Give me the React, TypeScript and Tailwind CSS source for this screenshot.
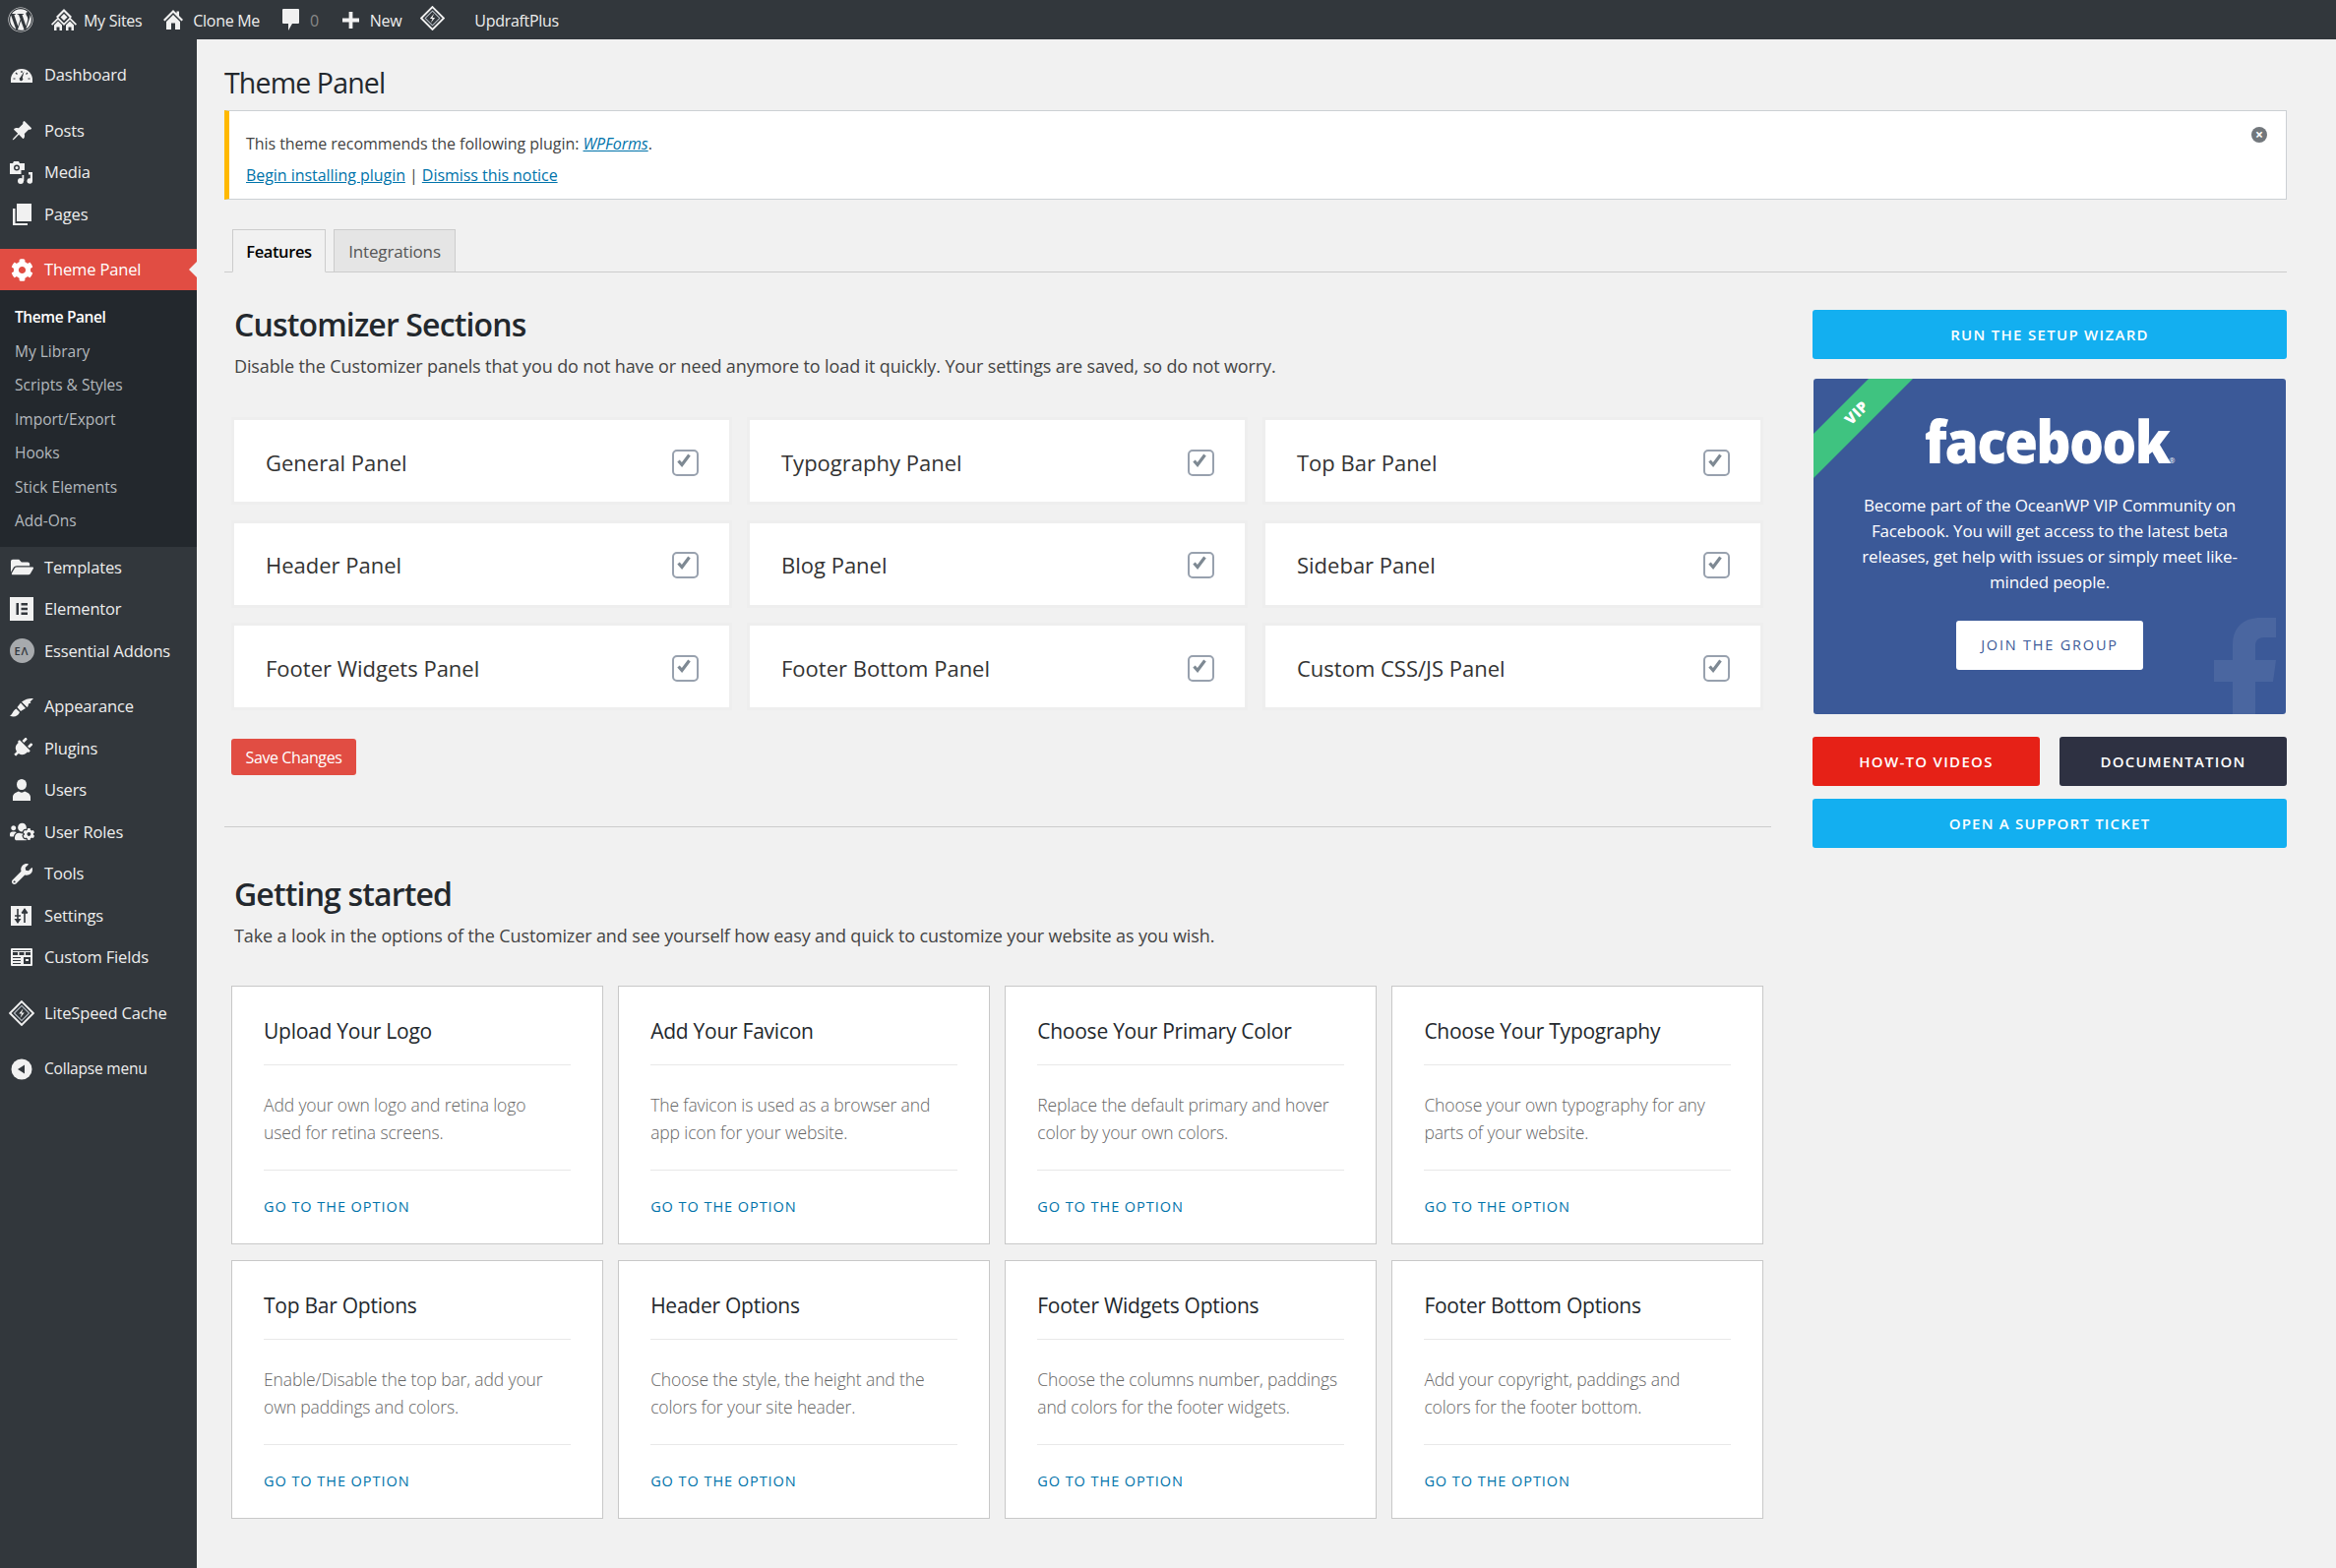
import React from 'react';
import { FaWordpress, FaCog, FaFolderOpen, FaPlug, FaUsersCog, FaWrench } from 'react-icons/fa';
import { BsPinAngleFill } from 'react-icons/bs';

const DashboardIcon = () => (
    <svg viewBox="0 0 24 24" className="w-6 h-6" fill="#f1f1f1">
        <path d="M1 20v-3a11 11 0 0 1 22 0v3z" />
        <path d="M12 8v2M6 10l1.500 1.500M18 10l-1.500 1.500M3.500 16h2M18.500 16h2" stroke="#32373c" strokeWidth="1.200" />
        <path d="M14.500 8.500 12.800 15a1.800 1.800 0 1 1-2-.4z" fill="#32373c" />
    </svg>
);

const MediaIcon = () => (
    <svg viewBox="0 0 24 24" className="w-6 h-6" fill="#f1f1f1">
        <path d="M0 3h3l1-2h5l1 2h5v7h-3.500v4H0z" />
        <circle cx="7" cy="7.500" r="3" fill="#32373c" />
        <circle cx="7" cy="7.500" r="1.500" />
        <path d="M14 12h9v9a2.800 2.800 0 1 1-2.200-2.700V14.500H19V12z" />
        <circle cx="11" cy="21" r="3" />
        <path d="M12.500 15h1.800v6h-1.800z" />
    </svg>
);

const PagesIcon = () => (
    <svg viewBox="0 0 24 24" className="w-6 h-6" fill="#f1f1f1">
        <path d="M7 1h15v18H7z" />
        <path d="M3 6h2.500v15H18v2H3z" />
    </svg>
);

const ElementorIcon = () => (
    <svg viewBox="0 0 24 24" className="w-6 h-6">
        <rect x="0" y="0" width="24" height="24" fill="#f1f1f1" />
        <path d="M6.500 6h2.500v12H6.500zM11.500 6h6.500v2.400h-6.500zM11.500 10.800h6.500v2.400h-6.500zM11.500 15.600h6.500V18h-6.500z" fill="#32373c" />
    </svg>
);

const BrushIcon = () => (
    <svg viewBox="0 0 24 24" className="w-6 h-6" fill="#f1f1f1">
        <path d="M0 21.500c2.500-.5 3-5.500 6.500-7l3.500 3.500c-1.500 4-6 6-10 3.500z" />
        <path d="M7.500 13 11 8.500l5 5.500-5 3z" />
        <path d="M12 7.500c4-3 8-4 12-3.500l-3.500 3.500 1 1-2.500 1-.5 2.500-1 1z" />
    </svg>
);

const UserIcon = () => (
    <svg viewBox="0 0 24 24" className="w-6 h-6" fill="#f1f1f1">
        <ellipse cx="12" cy="6.500" rx="5" ry="5.500" />
        <path d="M3 23v-4c0-3 4-5 6-5.500 1.500 1.500 4.500 1.500 6 0 2 .5 6 2.500 6 5.500v4z" />
    </svg>
);

const SettingsIcon = () => (
    <svg viewBox="0 0 24 24" className="w-6 h-6">
        <rect x="1" y="2" width="21" height="20" fill="#f1f1f1" />
        <path d="M8 5v14M15 5v14M5 12h6M12 9h6" stroke="#32373c" strokeWidth="1.600" />
        <path d="M4.500 15 8 20l3.500-5zM11.500 9 15 4l3.500 5z" fill="#32373c" />
    </svg>
);

const FieldsIcon = () => (
    <svg viewBox="0 0 24 24" className="w-6 h-6">
        <rect x="1" y="3" width="22" height="18" rx="1" fill="#f1f1f1" />
        <path d="M3 5h18v1H3zM3 7h5v3H3zM9.500 7h5v3h-5zM16 7h5v3h-5zM3 12h8v1H3zM3 15h8v1H3zM3 18h8v1H3zM14 12h7v7h-7z" fill="#32373c" />
        <path d="M16 14h3v2h-3z" fill="#f1f1f1" />
    </svg>
);

const DiamondIcon = ({ size = 'w-[26px] h-[26px]' }: { size?: string }) => (
    <svg viewBox="0 0 24 24" className={size} fill="none" stroke="#f1f1f1">
        <path d="M12 1 23 12 12 23 1 12z" strokeWidth="1.800" />
        <path d="M12 5 19 12 12 19 5 12z" strokeWidth="1" stroke="#b9c0c8" />
        <path d="M13.500 7.500 9.500 12.500H12L10.500 16.500 14.500 11.500H12z" fill="#f1f1f1" stroke="none" />
    </svg>
);

const CollapseIcon = () => (
    <svg viewBox="0 0 24 24" className="w-6 h-6">
        <circle cx="12" cy="12" r="10.500" fill="#f1f1f1" />
        <path d="M15 7.500v9L8 12z" fill="#32373c" />
    </svg>
);

const SitesIcon = () => (
    <svg viewBox="0 0 26 24" className="w-[26px] h-[24px]" fill="#f1f1f1">
        <path d="M13 1l8 8-1.500 1.500L13 4 6.500 10.500 5 9z" />
        <path d="M13 6l3.500 3.500L13 13 9.500 9.500z" />
        <path d="M7 9.500l7 7-1.200 1.200L7 12l-5.800 5.700L0 16.500z" />
        <path d="M19 9.500l7 7-1.200 1.200L19 12l-5.800 5.700-1.200-1.200z" />
        <path d="M7 13.500l4 4V23H8.500v-3.500h-3V23H3v-5.500zM19 13.500l4 4V23h-2.500v-3.500h-3V23H15v-5.500z" />
    </svg>
);

const HomeIcon = () => (
    <svg viewBox="0 0 20 20" className="w-5 h-5" fill="#f1f1f1">
        <path d="M10 0l3.500 3.500V1.500H16V6l4 4-1.500 1.500L10 3 1.500 11.500 0 10z" />
        <path d="M3 12l7-7 7 7v8h-5v-6.500H8V20H3z" />
    </svg>
);

const CommentIcon = () => (
    <svg viewBox="0 0 17 22" className="w-[17px] h-[22px]" fill="#f1f1f1">
        <path d="M1 0h15a1 1 0 0 1 1 1v13a1 1 0 0 1-1 1h-6l-4 7v-7H1a1 1 0 0 1-1-1V1a1 1 0 0 1 1-1z" />
    </svg>
);

const PlusIcon = () => (
    <svg viewBox="0 0 18 18" className="w-[17px] h-[17px]" fill="#f1f1f1">
        <path d="M7 0h4v7h7v4h-7v7H7v-7H0V7h7z" />
    </svg>
);

const EssentialIcon = () => (
    <span className="w-[25px] h-[25px] rounded-full bg-[#a7aaad] text-[#32373c] text-[11px] leading-[25px] text-center font-semibold tracking-[1px]">EΛ</span>
);

type MenuItem = { label: string; icon: React.ReactNode; gapBefore?: string };

const menuTop: MenuItem[] = [
    { label: 'Dashboard', icon: <DashboardIcon /> },
    { label: 'Posts', icon: <BsPinAngleFill className="text-[22px] text-[#f1f1f1]" />, gapBefore: 'mt-[14px]' },
    { label: 'Media', icon: <MediaIcon /> },
    { label: 'Pages', icon: <PagesIcon /> },
];

const menuBottom: MenuItem[] = [
    { label: 'Templates', icon: <FaFolderOpen className="text-[23px] text-[#f1f1f1]" /> },
    { label: 'Elementor', icon: <ElementorIcon /> },
    { label: 'Essential Addons', icon: <EssentialIcon /> },
    { label: 'Appearance', icon: <BrushIcon />, gapBefore: 'mt-[14px]' },
    { label: 'Plugins', icon: <FaPlug className="text-[21px] text-[#f1f1f1] rotate-45" /> },
    { label: 'Users', icon: <UserIcon /> },
    { label: 'User Roles', icon: <FaUsersCog className="text-[25px] text-[#f1f1f1]" /> },
    { label: 'Tools', icon: <FaWrench className="text-[21px] text-[#f1f1f1]" /> },
    { label: 'Settings', icon: <SettingsIcon /> },
    { label: 'Custom Fields', icon: <FieldsIcon /> },
    { label: 'LiteSpeed Cache', icon: <DiamondIcon />, gapBefore: 'mt-[14px]' },
];

const subMenu = ['Theme Panel', 'My Library', 'Scripts & Styles', 'Import/Export', 'Hooks', 'Stick Elements', 'Add-Ons'];

const panels = [
    'General Panel', 'Typography Panel', 'Top Bar Panel',
    'Header Panel', 'Blog Panel', 'Sidebar Panel',
    'Footer Widgets Panel', 'Footer Bottom Panel', 'Custom CSS/JS Panel',
];

const options = [
    { title: 'Upload Your Logo', desc: 'Add your own logo and retina logo\nused for retina screens.' },
    { title: 'Add Your Favicon', desc: 'The favicon is used as a browser and\napp icon for your website.' },
    { title: 'Choose Your Primary Color', desc: 'Replace the default primary and hover\ncolor by your own colors.' },
    { title: 'Choose Your Typography', desc: 'Choose your own typography for any\nparts of your website.' },
    { title: 'Top Bar Options', desc: 'Enable/Disable the top bar, add your\nown paddings and colors.' },
    { title: 'Header Options', desc: 'Choose the style, the height and the\ncolors for your site header.' },
    { title: 'Footer Widgets Options', desc: 'Choose the columns number, paddings\nand colors for the footer widgets.' },
    { title: 'Footer Bottom Options', desc: 'Add your copyright, paddings and\ncolors for the footer bottom.' },
];

const SideRow = ({ item }: { item: MenuItem }) => (
    <div className={`flex items-center h-[42.5px] text-[#eee] ${item.gapBefore || ''}`}>
        <span className="w-[45px] flex justify-center pr-[1px] shrink-0">{item.icon}</span>
        <span className="pt-[1px] text-[16.5px] tracking-[-0.15px]">{item.label}</span>
    </div>
);

const App: React.FC = () => {
    return (
        <div className="min-h-screen bg-[#f1f1f1] font-['Open_Sans','Noto_Sans',sans-serif] text-[#23282d]">
            <div className="h-10 bg-[#32373c] flex items-center text-[#eee] text-[16px] tracking-[-0.3px]">
                <FaWordpress className="text-[26px] text-[#f1f1f1] ml-[8px]" />
                <span className="ml-[18px]"><SitesIcon /></span>
                <span className="ml-[7px] pt-[2px]">My Sites</span>
                <span className="ml-[22px]"><HomeIcon /></span>
                <span className="ml-[10px] pt-[2px]">Clone Me</span>
                <span className="ml-[23px]"><CommentIcon /></span>
                <span className="ml-[11px] pt-[2px] text-[#888]">0</span>
                <span className="ml-[24px]"><PlusIcon /></span>
                <span className="ml-[11px] pt-[2px]">New</span>
                <span className="ml-[19px] -mt-[3px]"><DiamondIcon size="w-[25px] h-[25px]" /></span>
                <span className="ml-[30px] pt-[2px]">UpdraftPlus</span>
            </div>
            <div className="flex min-h-[1554px]">
                <aside className="w-[200px] shrink-0 bg-[#32373c] pt-[15px]">
                    {menuTop.map((item) => <SideRow key={item.label} item={item} />)}
                    <div className="mt-[14px] h-[42px] bg-[#e14d43] text-white flex items-center relative">
                        <span className="w-[45px] flex justify-center pr-[1px] shrink-0"><FaCog className="text-[23px]" /></span>
                        <span className="pt-[1px] text-[16.5px] tracking-[-0.15px]">Theme Panel</span>
                        <span className="absolute right-0 top-[13px] border-y-[8px] border-r-[8px] border-y-transparent border-r-[#f1f1f1]" />
                    </div>
                    <div className="bg-[#23282d] pt-[10px] pb-[9px]">
                        {subMenu.map((label, i) => (
                            <div key={label} className={`h-[34.5px] leading-[34.5px] pl-[15px] text-[15.5px] ${i === 0 ? 'text-white font-semibold tracking-[-0.4px]' : 'text-[#b4b9be]'}`}>
                                {label}
                            </div>
                        ))}
                    </div>
                    {menuBottom.map((item) => <SideRow key={item.label} item={item} />)}
                    <div className="mt-[15px] flex items-center h-[42px] text-[#eee]">
                        <span className="w-[45px] flex justify-center pr-[1px] shrink-0"><CollapseIcon /></span>
                        <span className="text-[15.5px] tracking-[-0.2px]">Collapse menu</span>
                    </div>
                </aside>

                <main className="flex-1 pl-[28px] pr-[50px]">
                    <h1 className="mt-[24px] h-10 leading-10 text-[28.5px] tracking-[-0.85px] text-[#23282d]">Theme Panel</h1>
                    <div className="mt-[8px] h-[91px] bg-white border border-[#ccd0d4] border-l-[5px] border-l-[#ffb900] relative pl-[17px] pt-[17px] text-[16px] tracking-[-0.05px] text-[#444]">
                        <p className="leading-[32px]">This theme recommends the following plugin: <a className="text-[#0073aa] underline italic font-medium">WPForms</a>.</p>
                        <p className="leading-[32px]">
                            <a className="text-[#0073aa] underline">Begin installing plugin</a> | <a className="text-[#0073aa] underline">Dismiss this notice</a>
                        </p>
                        <span className="absolute right-[19px] top-[16px] w-4 h-4 rounded-full bg-[#72777c] text-white text-[14px] leading-4 text-center font-bold">×</span>
                    </div>

                    <div className="mt-[30px] h-[44px] border-b border-[#ccc] flex pl-2 gap-2">
                        <div className="w-[95px] h-[44px] pt-[2px] border border-[#ccc] border-b-[#f1f1f1] bg-[#f1f1f1] text-black text-[16.5px] tracking-[-0.4px] font-semibold flex items-center justify-center">Features</div>
                        <div className="w-[124px] h-[43px] pt-[2px] border border-[#ccc] border-b-0 bg-[#e5e5e5] text-[#555] text-[17px] tracking-[-0.15px] flex items-center justify-center">Integrations</div>
                    </div>

                    <div className="flex">
                        <div className="w-[1572px]">
                            <h2 className="mt-[33px] ml-[10px] h-10 leading-10 text-[32px] font-semibold tracking-[-0.85px]">Customizer Sections</h2>
                            <p className="mt-[8px] ml-[10px] leading-7 text-[18px] tracking-[-0.12px] text-[#444]">
                                Disable the Customizer panels that you do not have or need anymore to load it quickly. Your settings are saved, so do not worry.
                            </p>
                            <div className="mt-[38px] ml-[7px] w-[1557px] grid grid-cols-3 gap-x-[15px] gap-y-[15.5px]">
                                {panels.map((name) => (
                                    <div key={name} className="h-[89px] bg-white border-[3px] border-[#eee] flex items-center justify-between pl-[32px] pr-[31px] pt-[3px]">
                                        <span className="text-[22px] font-medium text-[#333]">{name}</span>
                                        <span className="w-[27px] h-[27px] border-2 border-[#98a1ae] rounded-[5px] flex items-start bg-white">
                                            <svg viewBox="0 0 14 14" className="w-[14px] h-[14px] mt-[2px] ml-[3px]" fill="none" stroke="#7e8993" strokeWidth="3.200">
                                                <path d="M1.500 7.500 5 11.500 12.500 1.500" />
                                            </svg>
                                        </span>
                                    </div>
                                ))}
                            </div>
                            <button className="block mt-[29px] ml-[7px] w-[127px] h-[37px] bg-[#e14d43] rounded-[3px] text-white text-[16px] tracking-[-0.4px]">Save Changes</button>
                            <hr className="mt-[51.500px] border-t border-[#ccc]" />
                            <h2 className="mt-[48px] ml-[10px] h-10 leading-10 text-[32px] font-semibold tracking-[-0.85px]">Getting started</h2>
                            <p className="mt-[8px] ml-[10px] leading-7 text-[18px] tracking-[-0.12px] text-[#444]">
                                Take a look in the options of the Customizer and see yourself how easy and quick to customize your website as you wish.
                            </p>
                            <div className="mt-[37.500px] ml-[7px] w-[1557px] grid grid-cols-4 gap-x-[15.5px] gap-y-[16px]">
                                {options.map((card) => (
                                    <div key={card.title} className="h-[263px] bg-white border border-[#c8c8c8] px-[32px]">
                                        <h3 className="mt-[30px] leading-[30px] text-[21px] font-medium tracking-[-0.25px] text-[#23282d]">{card.title}</h3>
                                        <div className="mt-[19px] h-px bg-[#e8e8e8]" />
                                        <p className="mt-[26px] h-[56px] leading-7 whitespace-pre-line text-[17.5px] font-light tracking-[-0.12px] text-[#666]">{card.desc}</p>
                                        <div className="mt-[24px] h-px bg-[#e8e8e8]" />
                                        <a className="block mt-[27px] leading-5 text-[14.500px] font-medium tracking-[0.95px] text-[#0073aa]">GO TO THE OPTION</a>
                                    </div>
                                ))}
                            </div>
                        </div>

                        <div className="ml-[42px] flex-1 mt-[38px] text-center">
                            <button className="block w-full h-[50px] bg-[#13aff0] rounded-[3px] text-white text-[15px] font-semibold tracking-[1.3px]">RUN THE SETUP WIZARD</button>
                            <div className="mt-[20px] mx-px h-[341px] bg-[#3b5998] rounded-[3px] relative overflow-hidden pt-[27px]">
                                <svg viewBox="0 0 480 341" className="absolute inset-0 w-full h-full">
                                    <path d="M56 0h45L0 101V56z" fill="#3fc380" />
                                    <path d="M426 341v-33h-19v-22h19v-16c0-18 12-27 28-27h16v20h-12c-7 0-9 4-9 9v14h21l-3 22h-18v33z" fill="#fff" opacity="0.08" />
                                </svg>
                                <span className="absolute left-[30px] top-[23px] -rotate-45 text-white text-[15px] font-extrabold tracking-[0.5px]">VIP</span>
                                <div className="relative h-[72px] leading-[72px] text-white text-[60px] font-extrabold tracking-[-2px] scale-x-[0.92]">
                                    facebook<span className="text-[8px] font-normal tracking-normal align-baseline">®</span>
                                </div>
                                <p className="relative mt-[17px] leading-[26px] text-[17px] tracking-[-0.15px] text-white">
                                    Become part of the OceanWP VIP Community on<br />
                                    Facebook. You will get access to the latest beta<br />
                                    releases, get help with issues or simply meet like-<br />
                                    minded people.
                                </p>
                                <button className="relative mt-[26px] w-[190px] h-[50px] bg-white rounded-[3px] text-[#3b5998] text-[14.500px] tracking-[1.800px]">JOIN THE GROUP</button>
                            </div>
                            <div className="mt-[23px] flex justify-between">
                                <button className="w-[231px] h-[50px] bg-[#e62117] rounded-[3px] text-white text-[15px] font-semibold tracking-[1.3px]">HOW-TO VIDEOS</button>
                                <button className="w-[231px] h-[50px] bg-[#2e3142] rounded-[3px] text-white text-[15px] font-semibold tracking-[1.2px]">DOCUMENTATION</button>
                            </div>
                            <button className="block mt-[13px] w-full h-[50px] bg-[#13aff0] rounded-[3px] text-white text-[15px] font-semibold tracking-[1.2px]">OPEN A SUPPORT TICKET</button>
                        </div>
                    </div>
                </main>
            </div>
        </div>
    );
};

export default App;
